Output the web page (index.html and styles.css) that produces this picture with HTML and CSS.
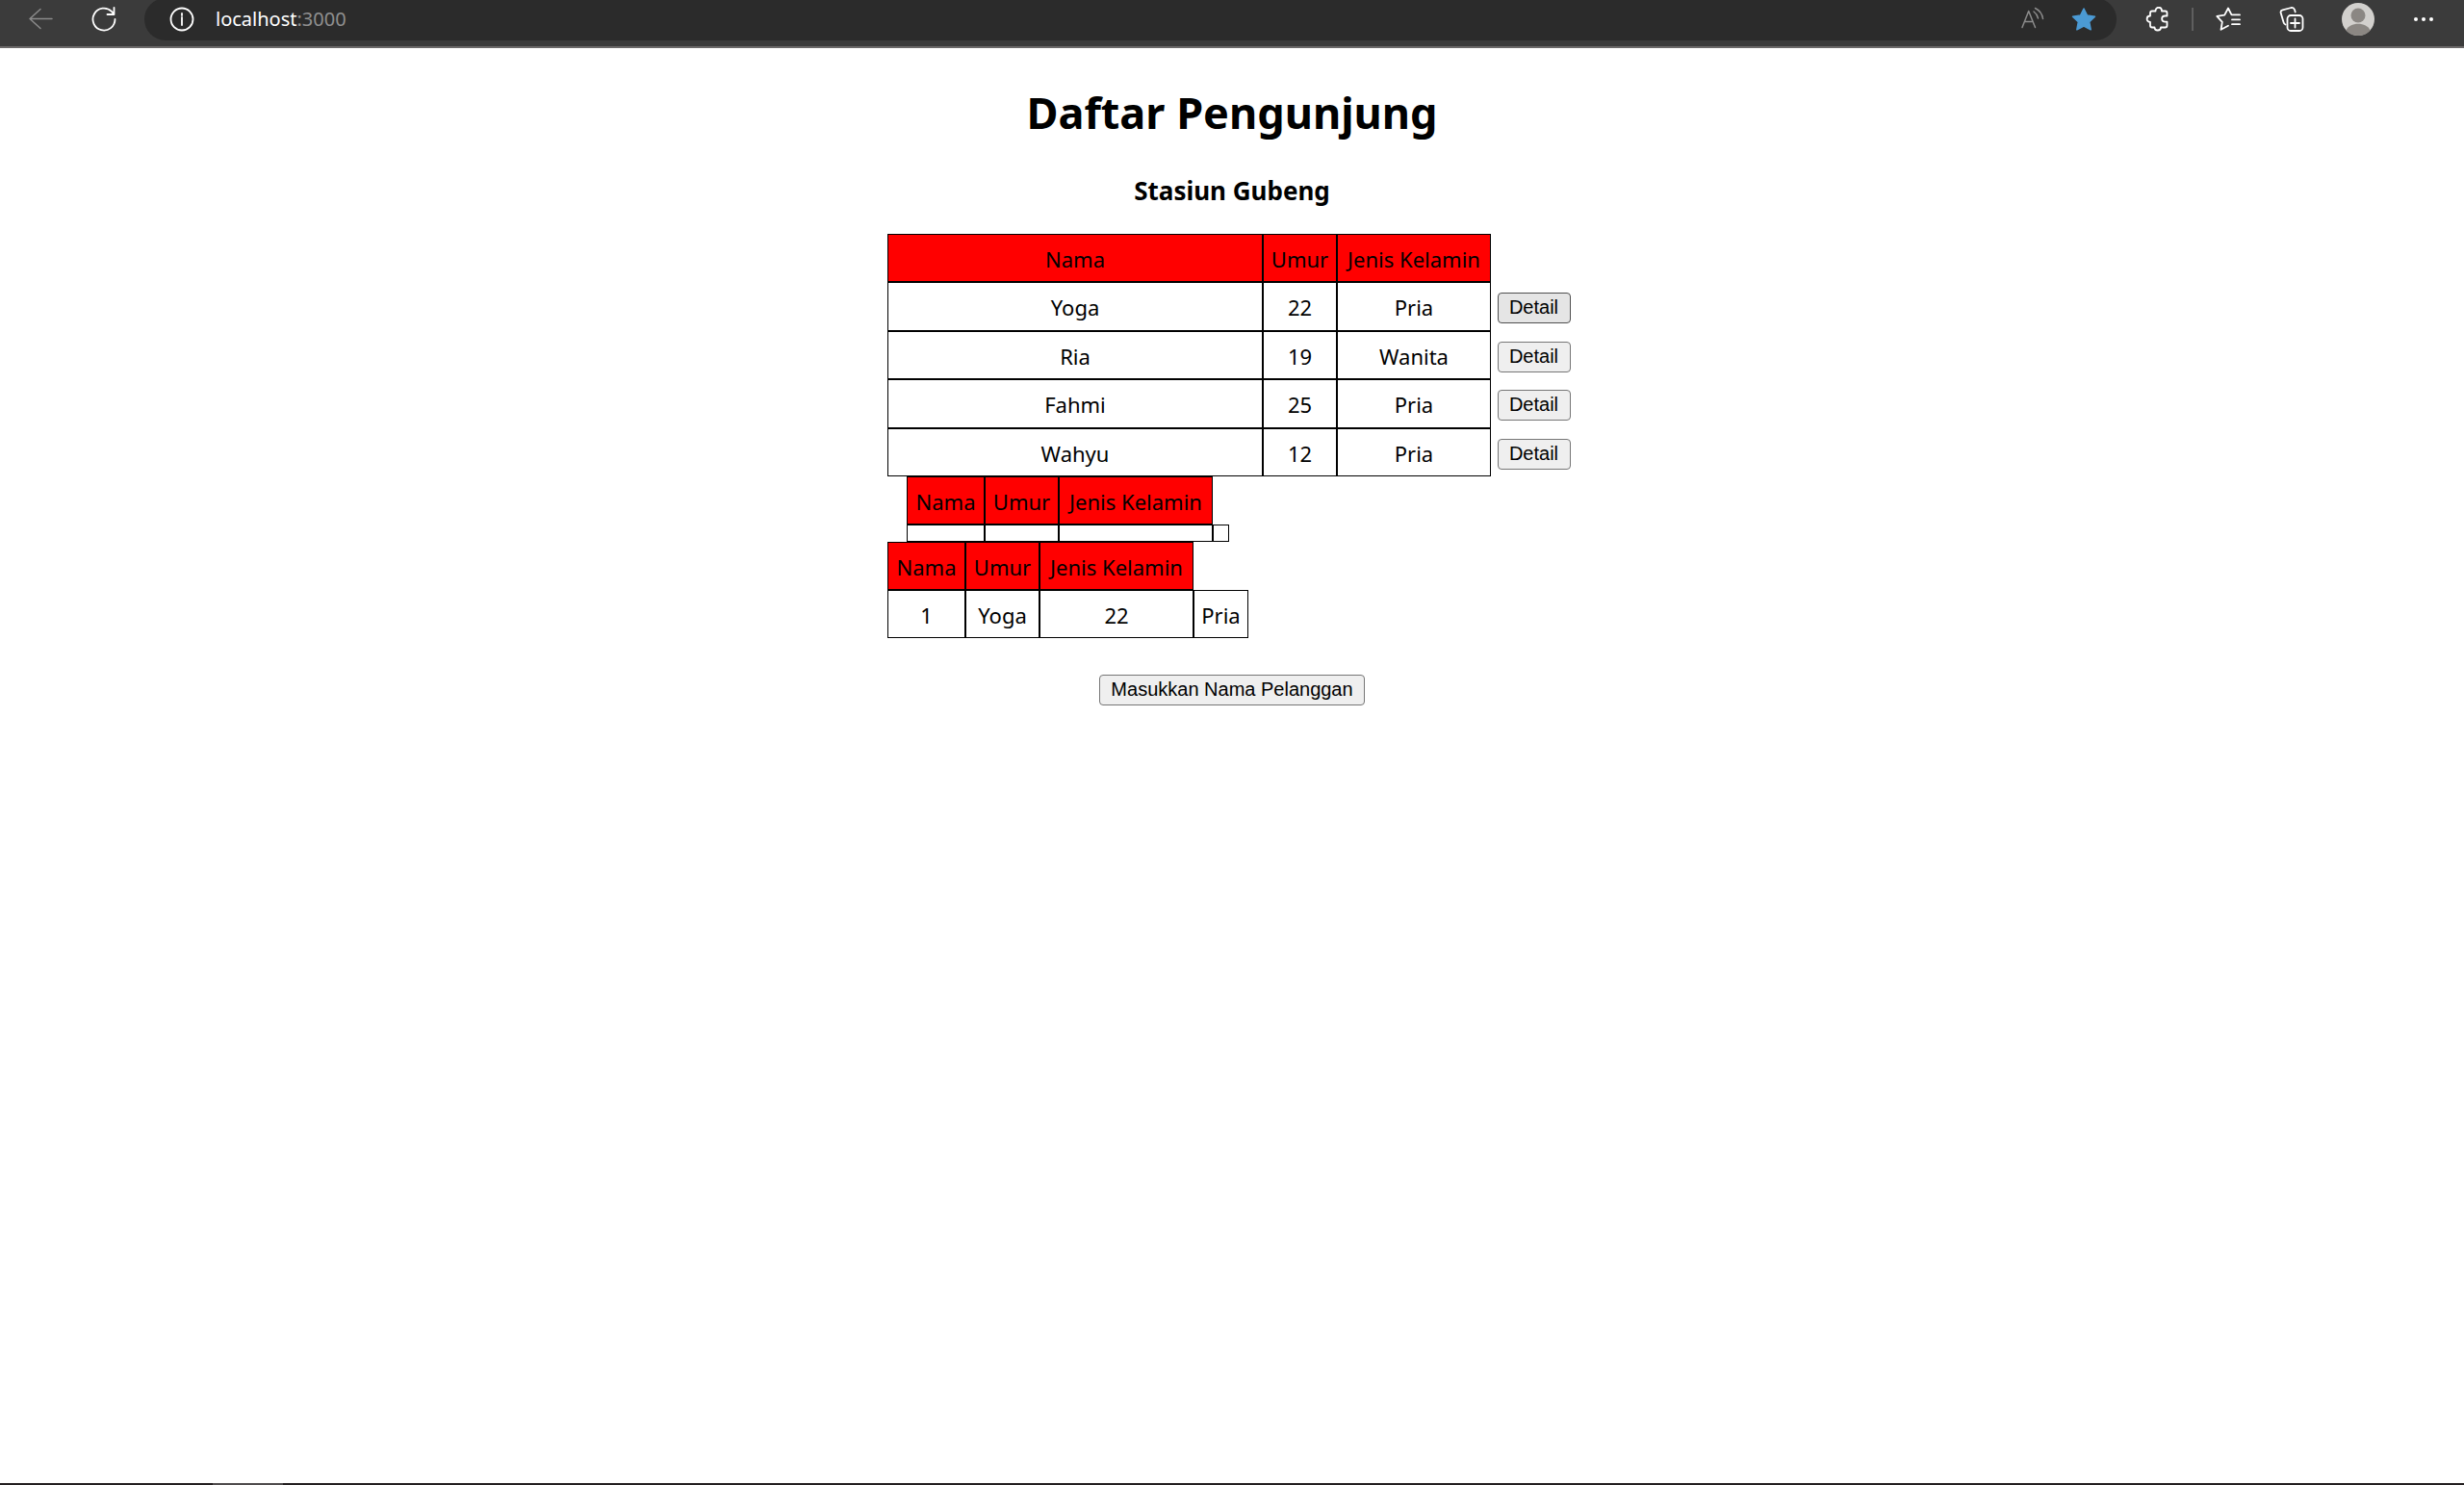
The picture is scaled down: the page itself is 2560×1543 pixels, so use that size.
FILE: index.html
```html
<!DOCTYPE html>
<html lang="id">
<head>
<meta charset="utf-8">
<title>Daftar Pengunjung</title>
<link rel="stylesheet" href="styles.css">
</head>
<body>
<header class="toolbar">
  <nav class="nav-group">
    <button class="tool dim" type="button" aria-label="Back">
      <svg width="26" height="24" viewBox="0 0 26 24"><path d="M13 1.500 2 11.500l11 10M2 11.500h23"/></svg>
    </button>
    <button class="tool" type="button" aria-label="Refresh">
      <svg class="bold" width="26" height="26" viewBox="0 0 26 26"><path d="M24.500 13A11.500 11.500 0 1 1 21 4.800l2.500 3M23.500 1v7h-7"/></svg>
    </button>
  </nav>
  <div class="address">
    <button class="tool info" type="button" aria-label="Site information">
      <svg class="bold" width="26" height="26" viewBox="0 0 26 26"><circle cx="13" cy="13" r="11.500"/><path d="M13 11v8M13 7v2"/></svg>
    </button>
    <div class="url" role="textbox" aria-label="Address">localhost<span class="port">:3000</span></div>
    <button class="tool small dim" type="button" aria-label="Read aloud">
      <svg width="26" height="26" viewBox="0 0 26 26"><path d="M3 21.500 9.700 4.500 16.500 21.500M5.300 15.500h8.800M15 5q3.500 2.500 4.500 7M16.500 1.500q7 3.500 8 11"/></svg>
    </button>
    <button class="tool small" type="button" aria-label="Favorite">
      <svg class="star" width="26" height="26" viewBox="0 0 26 26"><path d="m13 2 3.500 7 8 1.200-5.800 5.600 1.500 8L13 20l-7.200 3.800 1.500-8L1.500 10.200l8-1.200z"/></svg>
    </button>
  </div>
  <div class="actions">
    <button class="tool" type="button" aria-label="Extensions">
      <svg class="bold" width="26" height="26" viewBox="0 0 26 26"><path d="M8 4.500h3.500C11.500-.500 18 -.500 18 4.500H21.500q2 0 2 2V9.500H21.500C17 9.500 17 15.700 21.500 15.700H23.500V19.500q0 2-2 2H17C17 25.500 10.500 25.500 10.500 21.500H8q-2 0-2-2V16C1.500 16 1.500 9.500 6 9.500V6.500q0-2 2-2z"/></svg>
    </button>
    <span class="divider"></span>
    <button class="tool" type="button" aria-label="Favorites list">
      <svg class="bold" width="26" height="26" viewBox="0 0 26 26"><path d="M13 19.700 5.500 23.800l1.300-8L1.300 9.800l7.900-1.200L13 1.500l3.500 6.900H25M17 13.400h8M17 18.200h8"/></svg>
    </button>
    <button class="tool" type="button" aria-label="Collections">
      <svg class="bold" width="26" height="26" viewBox="0 0 26 26"><rect x="8.500" y="9" width="16" height="16" rx="3.500"/><path d="M16.500 12.500v9M12 17h9M6.500 18.500Q5 18 4.500 16L1.700 6.500Q1 4 3.500 3.300L12.500 1q2.500-.500 3.500 2l.700 2.500"/></svg>
    </button>
    <button class="tool profile" type="button" aria-label="Profile">
      <svg class="avatar" width="34" height="34" viewBox="0 0 34 34"><circle class="disc" cx="17" cy="17" r="17"/><circle cx="17" cy="13" r="7.500"/><path d="M4.500 28.500C8 19.500 26 19.500 29.500 28.500Q25 34 17 34T4.500 28.500z"/></svg>
    </button>
    <button class="tool more" type="button" aria-label="More">
      <svg class="dots" width="22" height="6" viewBox="0 0 22 6"><circle cx="3" cy="3" r="2"/><circle cx="11" cy="3" r="2"/><circle cx="19" cy="3" r="2"/></svg>
    </button>
  </div>
</header>

<main class="page">
  <h1 class="title">Daftar Pengunjung</h1>
  <h3 class="subtitle">Stasiun Gubeng</h3>
  <div class="tables">
    <table class="visitors">
      <colgroup><col class="wide"><col class="age"><col class="gender"><col class="action"></colgroup>
      <thead><tr><th>Nama</th><th>Umur</th><th>Jenis Kelamin</th></tr></thead>
      <tbody>
        <tr><td>Yoga</td><td>22</td><td>Pria</td><td class="plain"><button class="btn active" type="button">Detail</button></td></tr>
        <tr><td>Ria</td><td>19</td><td>Wanita</td><td class="plain"><button class="btn" type="button">Detail</button></td></tr>
        <tr><td>Fahmi</td><td>25</td><td>Pria</td><td class="plain"><button class="btn" type="button">Detail</button></td></tr>
        <tr><td>Wahyu</td><td>12</td><td>Pria</td><td class="plain"><button class="btn" type="button">Detail</button></td></tr>
      </tbody>
    </table>
    <table class="blank">
      <colgroup><col class="name"><col class="age"><col class="gender"><col class="tiny"></colgroup>
      <thead><tr><th>Nama</th><th>Umur</th><th>Jenis Kelamin</th></tr></thead>
      <tbody><tr><td></td><td></td><td></td><td></td></tr></tbody>
    </table>
    <table class="detail">
      <colgroup><col class="name"><col class="age"><col class="gender"><col class="extra"></colgroup>
      <thead><tr><th>Nama</th><th>Umur</th><th>Jenis Kelamin</th></tr></thead>
      <tbody><tr><td>1</td><td>Yoga</td><td>22</td><td>Pria</td></tr></tbody>
    </table>
  </div>
  <button class="btn add" type="button">Masukkan Nama Pelanggan</button>
</main>
<footer class="taskbar"><span class="task"></span></footer>
</body>
</html>
```
FILE: styles.css
```css
* { box-sizing: border-box; }

body {
  margin: 0;
  min-height: 100vh;
  display: flex;
  flex-direction: column;
  background: #fff;
  color: #000;
  font-family: "Segoe UI", "Noto Sans", sans-serif;
  font-size: 22px;
}

/* Browser toolbar */
.toolbar {
  display: flex;
  height: 50px;
  overflow: hidden;
  background: #3b3b3b;
  border-bottom: 2px solid #6b6969;
}
.nav-group { display: flex; padding: 0 9px; }
.address {
  flex: 1;
  display: flex;
  align-items: center;
  height: 44px;
  margin-top: -2px;
  padding: 0 7px 0 12px;
  border-radius: 22px;
  background: #2b2b2b;
}
.url {
  flex: 1;
  color: #fff;
  font-size: 20px;
  line-height: 28px;
}
.port { color: #8f8f8f; }
.actions { display: flex; padding: 0 10px 0 9px; }
.tool {
  display: flex;
  align-items: center;
  justify-content: center;
  width: 66px;
  height: 40px;
  padding: 0;
  border: 0;
  background: none;
  color: #fff;
}
.tool svg {
  fill: none;
  stroke: currentColor;
  stroke-width: 1.5;
  stroke-linecap: round;
  stroke-linejoin: round;
}
.tool .bold { stroke-width: 1.8; }
.dim { color: #8b8b8b; }
.info { width: 54px; margin-right: 8px; }
.small { width: 54px; }
.profile { width: 72px; }
.more { width: 64px; }
.tool .star { fill: #4b9ad4; stroke: #4b9ad4; }
.tool .avatar { fill: #8b8783; stroke: none; }
.avatar .disc { fill: #d2d0cd; }
.tool .dots { fill: #fff; stroke: none; }
.divider {
  width: 2px;
  height: 24px;
  margin: 8px 3px;
  background: #5f5f5f;
}

/* Page */
.page {
  flex: 1;
  display: flex;
  flex-direction: column;
  align-items: center;
}
.title {
  margin: 35px 0 0;
  font-size: 45px;
  line-height: 64px;
}
.subtitle {
  margin: 31px 0 26px;
  font-size: 26px;
  line-height: 37px;
}
.tables { width: 716px; max-width: 100%; }
table {
  table-layout: fixed;
  border-collapse: separate;
  border-spacing: 0;
  text-align: center;
}
th, td {
  height: 50px;
  padding: 2px 0 0;
  border: 1px solid #000;
  font-weight: 400;
  line-height: 30px;
}
th { background: #f00; }
.visitors { width: 100%; height: 252px; }
.visitors .plain { padding: 2px 0 0; border: 0; }
.blank { width: 335px; margin-left: 20px; }
.detail { width: 375px; }
.blank td { padding: 0; height: 18px; }
.wide { width: 390px; }
.name { width: 81px; }
.age { width: 77px; }
.gender { width: 160px; }
.action { width: 89px; }
.tiny { width: 17px; }
.extra { width: 57px; }

.btn {
  height: 32px;
  padding: 0 11px 2px;
  border: 1px solid #767676;
  border-radius: 4px;
  background: #efefef;
  color: #000;
  font-family: Arial, "Liberation Sans", sans-serif;
  font-size: 20px;
  line-height: 28px;
}
.plain .btn { width: 76px; vertical-align: middle; }
.btn.active { background: #e5e5e5; border-color: #4f4f4f; }
.add { margin-top: 38px; }

/* Top edge of the taskbar */
.taskbar {
  display: flex;
  height: 2px;
  padding-left: 221px;
  background: #231f20;
}
.task { width: 73px; background: #4f4c4d; }
```
